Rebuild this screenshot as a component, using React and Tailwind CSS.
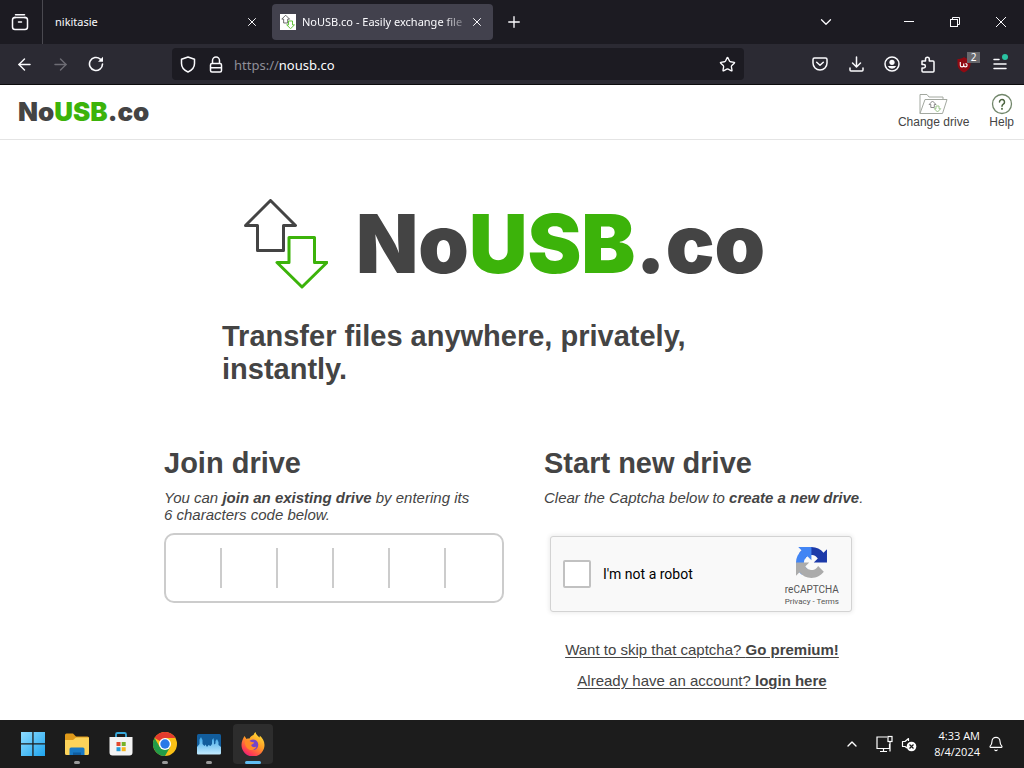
import { Star, X, Plus, ChevronDown, ChevronUp, ArrowLeft, ArrowRight, Bell } from "lucide-react";

const codeFields = [1, 2, 3, 4, 5, 6];

const UP_ARROW = "M27.500 1.500 L52.500 26.500 H40.500 V51.500 H14.500 V26.500 H2.500 Z";
const DOWN_ARROW = "M46 38.500 H71.500 V63.500 H84 L59 88 L34 63.500 H46 Z";

function Arrows({ className, stroke = 3 }) {
  return (
    <svg viewBox="0 0 85 90" className={className} fill="none" strokeWidth={stroke} strokeLinejoin="round">
      <path d={UP_ARROW} stroke="#444" />
      <path d={DOWN_ARROW} stroke="#3cb30a" />
    </svg>
  );
}

function Wordmark({ className }) {
  return (
    <span className={`font-[Inter,sans-serif] text-[#444] ${className}`}>
      No<span className="text-[#3cb30a]">USB</span>.co
    </span>
  );
}

function IconButton({ label, className = "", children }) {
  return (
    <button type="button" aria-label={label} className={`flex items-center justify-center ${className}`}>
      {children}
    </button>
  );
}

function TabBar() {
  return (
    <div className="flex h-11 items-center bg-[#1c1b22]">
      <IconButton label="Firefox View" className="h-full w-[43px] border-r border-[#4a4950] pr-0.5">
        <svg width="18" height="18" viewBox="0 0 18 18" fill="none" stroke="#fbfbfe" strokeWidth="1.500" strokeLinecap="round">
          <path d="M4.500 1.700h9" />
          <rect x="1.500" y="4.500" width="15" height="12" rx="2.500" />
          <path d="M3 4.500h1.500M13.500 4.500h1.500M7.500 9h3" />
        </svg>
      </IconButton>
      <div className="flex h-9 w-[229px] items-center justify-between pl-3 pr-[13px]">
        <span>nikitasie</span>
        <IconButton label="Close tab nikitasie">
          <X size={14} strokeWidth={1.7} />
        </IconButton>
      </div>
      <div className="flex h-9 w-[221px] items-center rounded bg-[#42414d] pl-2 pr-[9px]">
        <span className="flex size-4 shrink-0 items-center justify-center bg-white">
          <Arrows className="size-3.5" stroke={5} />
        </span>
        <span className="ml-1.5 flex-1 whitespace-nowrap [mask-image:linear-gradient(to_right,black_84%,transparent)]">
          NoUSB.co - Easily exchange file
        </span>
        <IconButton label="Close tab NoUSB.co">
          <X size={14} strokeWidth={1.7} />
        </IconButton>
      </div>
      <IconButton label="New tab" className="ml-3">
        <Plus size={18} strokeWidth={1.8} />
      </IconButton>
      <div className="ml-auto flex items-center">
        <IconButton label="List all tabs" className="mr-[42px] w-9">
          <ChevronDown size={18} strokeWidth={1.7} />
        </IconButton>
        <IconButton label="Minimize" className="w-[46px]">
          <svg width="12" height="12" stroke="currentColor"><path d="M1 5.500h10" /></svg>
        </IconButton>
        <IconButton label="Restore" className="w-[46px]">
          <svg width="12" height="12" viewBox="0 0 12 12" fill="none" stroke="currentColor">
            <rect x="1.500" y="3.500" width="7" height="7" />
            <path d="M3.500 3.500v-2h7v7h-2" />
          </svg>
        </IconButton>
        <IconButton label="Close window" className="w-[46px]">
          <svg width="12" height="12" stroke="currentColor"><path d="M1 1l10 10M11 1L1 11" /></svg>
        </IconButton>
      </div>
    </div>
  );
}

function NavBar() {
  return (
    <div className="flex h-[41px] items-center border-b border-[#0c0c0d] bg-[#2b2a33]">
      <IconButton label="Back" className="ml-3 w-6">
        <ArrowLeft size={19} strokeWidth={1.8} />
      </IconButton>
      <IconButton label="Forward" className="ml-3 w-6 text-[#6d6c74]">
        <ArrowRight size={19} strokeWidth={1.8} />
      </IconButton>
      <IconButton label="Reload" className="ml-3 w-6">
        <svg width="16" height="16" viewBox="0 0 16 16" fill="none" stroke="currentColor" strokeWidth="1.600" strokeLinecap="round">
          <path d="M14.500 8A6.500 6.500 0 1 1 12.300 3.100" />
          <path d="M15 .8v5h-5z" fill="currentColor" stroke="none" />
        </svg>
      </IconButton>
      <div className="ml-16 flex h-8 flex-1 items-center rounded bg-[#1c1b22] pl-2 pr-2">
        <svg width="16" height="17" viewBox="0 0 16 17" fill="none" stroke="currentColor" strokeWidth="1.500" strokeLinejoin="round">
          <path d="M8 1l6.500 2.300v4.200c0 4-2.600 6.800-6.500 8.500C4.100 14.300 1.500 11.500 1.500 7.500V3.300z" />
        </svg>
        <svg width="14" height="17" viewBox="0 0 14 17" className="ml-[13px]" fill="none" stroke="currentColor" strokeWidth="1.500">
          <rect x="1.500" y="7.500" width="11" height="8.500" rx="1.500" />
          <path d="M3.500 7.500V4.500a3.500 3.500 0 0 1 7 0v3M1.500 11.700h11" />
        </svg>
        <span className="ml-[11px] flex-1 pt-[3px] font-['Noto_Sans',sans-serif] text-[13px] text-[#8f8f98]">
          https://<span className="text-[#fbfbfe]">nousb.co</span>
        </span>
        <IconButton label="Bookmark this page">
          <Star size={17} strokeWidth={1.9} />
        </IconButton>
      </div>
      <div className="ml-[58px] flex items-center pr-1.5">
        <IconButton label="Save to Pocket" className="w-9">
          <svg width="16" height="14" viewBox="0 0 16 14" fill="none" stroke="currentColor" strokeWidth="1.500" strokeLinecap="round" strokeLinejoin="round">
            <path d="M2.500 1h11a1.500 1.500 0 0 1 1.500 1.500V6a7 7 0 0 1-14 0V2.500A1.500 1.500 0 0 1 2.500 1z" />
            <path d="M4.700 5.200L8 8.300l3.300-3.100" />
          </svg>
        </IconButton>
        <IconButton label="Downloads" className="w-9">
          <svg width="15" height="16" viewBox="0 0 15 16" fill="none" stroke="currentColor" strokeWidth="1.500" strokeLinecap="round" strokeLinejoin="round">
            <path d="M7.500 1v9.500M3.500 7l4 4 4-4M1 12v2a1 1 0 0 0 1 1h11a1 1 0 0 0 1-1v-2" />
          </svg>
        </IconButton>
        <IconButton label="Account" className="w-9">
          <svg width="16" height="16" viewBox="0 0 16 16" fill="none" stroke="currentColor" strokeWidth="1.500">
            <circle cx="8" cy="8" r="7" />
            <circle cx="8" cy="6.300" r="2.600" fill="currentColor" stroke="none" />
            <path d="M3.800 10h8.400a4.600 4.600 0 0 1-8.400 0z" fill="currentColor" stroke="none" />
          </svg>
        </IconButton>
        <IconButton label="Extensions" className="w-9">
          <svg width="16" height="17" viewBox="0 0 16 17" fill="none" stroke="currentColor" strokeWidth="1.500" strokeLinejoin="round">
            <path d="M2 5h3.500V3.200a1.900 1.900 0 0 1 3.800 0V5H13a1 1 0 0 1 1 1v9a1 1 0 0 1-1 1H3a1 1 0 0 1-1-1v-3h1.700a1.700 1.700 0 0 0 0-3.400H2z" />
          </svg>
        </IconButton>
        <IconButton label="uBlock Origin" className="relative w-9">
          <svg width="16" height="17" viewBox="0 0 16 17">
            <path d="M8 1c2 1.500 4 2 6.500 2v5c0 4-2.500 6.500-6.500 8.500C4 14.500 1.500 12 1.500 8V3C4 3 6 2.500 8 1z" fill="#900a12" />
            <path d="M4.300 6v3.200a1.700 1.700 0 0 0 3.400 0V7.500M7.700 9.200a1.700 1.700 0 0 0 3.400 0 1.700 1.700 0 0 0-1.700-1.700" fill="none" stroke="#fff" strokeWidth="1.100" />
          </svg>
          <span className="absolute -top-1 right-0.5 flex h-[11px] w-[13px] items-center justify-center bg-[#68686d] text-[10px] text-white">
            2
          </span>
        </IconButton>
        <IconButton label="Open application menu" className="relative w-9">
          <svg width="14" height="12" viewBox="0 0 14 12" stroke="currentColor" strokeWidth="1.500" strokeLinecap="round">
            <path d="M1 1.500h5M1 6h12M1 10.500h12" />
          </svg>
          <span className="absolute -top-1 right-2.5 size-1.5 rounded-full bg-[#2ac3a2]" />
        </IconButton>
      </div>
    </div>
  );
}

function SiteHeader() {
  return (
    <header className="flex h-[55px] items-center justify-between border-b border-[#e4e4e4] pl-[18px] pr-2.5">
      <a href="#home" className="pb-0.5">
        <Wordmark className="text-[26px] font-black" />
      </a>
      <nav className="flex items-end gap-5 pb-0.5 text-[12px] text-[#444]">
        <a href="#change" className="flex flex-col items-center leading-[14px]">
          <svg width="29" height="22" viewBox="0 0 29 22" fill="none" stroke="#a3a8a0" strokeLinejoin="round">
            <path d="M1 20.500V1.500h7l2 2.500h14v3" />
            <path d="M1 20.500L6 6.500h22L23.500 20.500z" />
            <path d="M13.500 8l3.500 3.500h-1.700v3h-3.500v-3h-1.700z" stroke="#8a8a8a" />
            <path d="M17 13h3v2.700h1.700L18.500 19l-3.200-3.300H17z" stroke="#9cc58c" />
          </svg>
          Change drive
        </a>
        <a href="#help" className="flex flex-col items-center leading-[14px]">
          <svg width="22" height="22" viewBox="0 0 22 22" fill="none" stroke="#71866a" strokeWidth="1.300" strokeLinecap="round">
            <circle cx="11" cy="11" r="9.500" />
            <path d="M8.500 9a2.500 2.500 0 1 1 3.800 2.100c-.9.600-1.300 1-1.300 2.100" stroke="#4b633f" strokeWidth="1.500" />
            <path d="M11 15.700v.2" stroke="#4b633f" strokeWidth="1.800" />
          </svg>
          Help
        </a>
      </nav>
    </header>
  );
}

function JoinDrive() {
  return (
    <section className="w-[340px]">
      <h2 className="text-[29px] font-bold leading-[33px]">Join drive</h2>
      <p className="mt-[9px] text-[15px] italic leading-[17px]">
        You can <b>join an existing drive</b> by entering its
        <br />6 characters code below.
      </p>
      <div className="mt-2.5 flex h-[70px] items-center rounded-[10px] border-2 border-[#ccc]">
        {codeFields.map((n) => (
          <input
            key={n}
            type="text"
            maxLength={1}
            aria-label={`Code character ${n}`}
            className="h-10 w-1/6 border-r-2 border-[#ccc] text-center text-2xl outline-none last:border-r-0"
          />
        ))}
      </div>
    </section>
  );
}

function Captcha() {
  return (
    <div className="ml-1.5 flex h-[76px] w-[302px] items-center rounded-[3px] border border-[#d3d3d3] bg-[#f9f9f9] pl-3 pr-3 font-[Roboto,sans-serif] text-black shadow-[0_0_4px_1px_rgba(0,0,0,0.08)]">
      <input
        id="robot"
        type="checkbox"
        className="size-7 appearance-none rounded-xs border-2 border-[#c1c1c1] bg-white"
      />
      <label htmlFor="robot" className="ml-3 text-[14px]">
        I'm not a robot
      </label>
      <div className="ml-auto flex flex-col items-center pt-1.5 text-[#555]">
        <svg width="31" height="31" viewBox="0 0 64 64">
          <path d="M64 31.955l-.033-1.370V4.687l-7.160 7.160C50.948 4.674 42.033.093 32.050.093c-10.400 0-19.622 4.960-25.458 12.640l11.736 11.860a15.550 15.550 0 0 1 4.754-5.334c2.050-1.600 4.952-2.906 8.968-2.906.485 0 .860.057 1.135.163 4.976.393 9.288 3.140 11.828 7.124l-8.307 8.307L64 31.953" fill="#1c3aa9" />
          <path d="M31.862.094l-1.370.033H4.594l7.160 7.160C4.580 13.147 0 22.060 0 32.046c0 10.400 4.960 19.622 12.640 25.458L24.500 45.768a15.550 15.550 0 0 1-5.334-4.754c-1.600-2.050-2.906-4.952-2.906-8.968 0-.485.057-.860.163-1.135.393-4.976 3.140-9.288 7.124-11.828l8.307 8.307L31.860.095" fill="#4285f4" />
          <path d="M.001 32.045l.033 1.370v25.898l7.160-7.160c5.860 7.173 14.774 11.754 24.760 11.754 10.400 0 19.622-4.960 25.458-12.640l-11.736-11.860a15.550 15.550 0 0 1-4.754 5.334c-2.050 1.600-4.952 2.906-8.968 2.906-.485 0-.860-.057-1.135-.163-4.976-.393-9.288-3.140-11.828-7.124l8.307-8.307L0 32.047" fill="#ababab" />
        </svg>
        <span className="mt-1.5 text-[10px] leading-3">reCAPTCHA</span>
        <span className="text-[8px] leading-[11px]">
          <a href="#privacy">Privacy</a> - <a href="#terms">Terms</a>
        </span>
      </div>
    </div>
  );
}

function StartDrive() {
  return (
    <section className="w-[316px]">
      <h2 className="text-[29px] font-bold leading-[33px]">Start new drive</h2>
      <p className="mt-[9px] whitespace-nowrap text-[15px] italic leading-[17px]">
        Clear the Captcha below to <b>create a new drive</b>.
      </p>
      <div className="mt-[30px]">
        <Captcha />
      </div>
      <div className="mt-[29px] flex flex-col items-center gap-3.5 text-[15px] leading-[17px]">
        <a href="#premium" className="underline underline-offset-2">
          Want to skip that captcha? <b>Go premium!</b>
        </a>
        <a href="#login" className="underline underline-offset-2">
          Already have an account? <b>login here</b>
        </a>
      </div>
    </section>
  );
}

function WindowsIcon() {
  return (
    <svg width="24" height="24" viewBox="0 0 24 24">
      <defs>
        <linearGradient id="win" x1="0" y1="0" x2="1" y2="1">
          <stop offset="0" stopColor="#8edcff" />
          <stop offset="1" stopColor="#1ea4ee" />
        </linearGradient>
      </defs>
      <path d="M0 0h11.300v11.300H0zM12.600 0H24v11.300H12.600zM0 12.600h11.300V24H0zM12.600 12.600H24V24H12.600z" fill="url(#win)" />
    </svg>
  );
}

function FolderIcon() {
  return (
    <svg width="26" height="24" viewBox="0 0 26 24">
      <path d="M1 3a1.500 1.500 0 0 1 1.500-1.500H9L12 4.500h11.500A1.500 1.500 0 0 1 25 6v7H1z" fill="#e09a1a" />
      <path d="M1 8h8l3-2.500h13v16a1.500 1.500 0 0 1-1.500 1.500h-21A1.500 1.500 0 0 1 1 21.500z" fill="#fcd35a" />
      <path d="M5.500 23v-6A1.500 1.500 0 0 1 7 15.500h12a1.500 1.500 0 0 1 1.500 1.500v6z" fill="#1979c4" />
      <path d="M9 23v-2.500h8V23z" fill="#0f5c9e" />
    </svg>
  );
}

function StoreIcon() {
  return (
    <svg width="24" height="24" viewBox="0 0 24 24">
      <path d="M7 6V2.500A1.500 1.500 0 0 1 8.500 1h7A1.500 1.500 0 0 1 17 2.500V6" fill="none" stroke="#38a9dc" strokeWidth="1.800" />
      <path d="M.5 5h23v15.500a3 3 0 0 1-3 3h-17a3 3 0 0 1-3-3z" fill="#f3f3f3" />
      <path d="M7.500 10h4v4h-4z" fill="#e2492d" />
      <path d="M12.700 10h4v4h-4z" fill="#75b126" />
      <path d="M7.500 15.200h4v4h-4z" fill="#2399d6" />
      <path d="M12.700 15.200h4v4h-4z" fill="#f5b51b" />
    </svg>
  );
}

function ChromeIcon() {
  return (
    <svg width="24" height="24" viewBox="0 0 24 24">
      <circle cx="12" cy="12" r="12" fill="#fbc116" />
      <path d="M12 12L1.600 6A12 12 0 0 1 22.400 6H12z" fill="#e33b2e" />
      <path d="M1.600 6A12 12 0 0 0 12 24l5.200-9L12 12 6.800 15z" fill="#229b48" />
      <circle cx="12" cy="12" r="6" fill="#fff" />
      <circle cx="12" cy="12" r="4.700" fill="#2879e8" />
    </svg>
  );
}

function MonitorIcon() {
  return (
    <svg width="26" height="22" viewBox="0 0 26 22">
      <defs>
        <linearGradient id="graph" x1="0" y1="0" x2="0" y2="1">
          <stop offset="0" stopColor="#3aa5e6" />
          <stop offset="1" stopColor="#c4ecff" />
        </linearGradient>
      </defs>
      <rect x="1" y="1" width="24" height="20" rx="1.500" fill="#125d9c" />
      <path d="M1 14l2.500-3V6.500L5 4l1.500 3v4l2 2 1-1.500 1.500 2.500 1.500-2 2 1 1.500-2V7l1.500-2L18 8v3.500l1.500-1V8L21 6l1.500 3v3l2.500 2v6a1.500 1.500 0 0 1-1.500 1.500h-21A1.500 1.500 0 0 1 1 19.500z" fill="url(#graph)" />
    </svg>
  );
}

function FirefoxIcon() {
  return (
    <svg width="24" height="24" viewBox="0 0 24 24">
      <defs>
        <linearGradient id="fox" x1="0.800" y1="0" x2="0.200" y2="1">
          <stop offset="0" stopColor="#ffe43b" />
          <stop offset="0.450" stopColor="#ff9a24" />
          <stop offset="0.800" stopColor="#ff4150" />
          <stop offset="1" stopColor="#e31587" />
        </linearGradient>
      </defs>
      <path d="M3.500 4l2 3c1-.5 2-.600 3-.5C9.300 4.500 11 3.500 12.500 3 13 1.800 13.600.8 14.500 0c.5 2.500 2.200 3.800 4 5.500.3-.6.300-1.300.2-2C21.500 6 23.500 9 23.500 13a11.500 11.500 0 0 1-23 0C.5 9.500 2 6.500 3.500 4z" fill="url(#fox)" />
      <circle cx="12" cy="12.800" r="5.300" fill="#7446c8" />
      <path d="M4 9c2-1 4-.8 6 .7 1 .6 2.500.3 3.200.8-.5 1.600-2.500 1.700-3 2.800.8 2 3.500 2.300 5.200 1.200-1 3-4.500 4.500-7.500 3C5 16 3.500 12.500 4 9z" fill="#ff8a27" />
    </svg>
  );
}

const taskbarApps = [
  { name: "Start", icon: <WindowsIcon /> },
  { name: "File Explorer", icon: <FolderIcon />, running: true },
  { name: "Microsoft Store", icon: <StoreIcon /> },
  { name: "Google Chrome", icon: <ChromeIcon />, running: true },
  { name: "Task Manager", icon: <MonitorIcon />, running: true },
  { name: "Firefox", icon: <FirefoxIcon />, active: true },
];

function Taskbar() {
  return (
    <footer className="flex h-12 items-center justify-between bg-[#1c1c1c] pl-[13px] pr-5 font-['Open_Sans',sans-serif] text-white">
      <div className="flex gap-1">
        {taskbarApps.map((app) => (
          <button
            key={app.name}
            type="button"
            aria-label={app.name}
            className={`relative flex size-10 items-center justify-center rounded ${app.active ? "bg-[#2d2d2d]" : ""}`}
          >
            {app.icon}
            {app.running && <span className="absolute bottom-0 h-[3px] w-1.5 rounded-full bg-[#9a9a9a]" />}
            {app.active && <span className="absolute bottom-0 h-[3px] w-4 rounded-full bg-[#5fbdf2]" />}
          </button>
        ))}
      </div>
      <div className="flex items-center">
        <IconButton label="Show hidden icons">
          <ChevronUp size={16} strokeWidth={2} />
        </IconButton>
        <svg width="17" height="18" viewBox="0 0 17 18" className="ml-4" fill="none" stroke="currentColor" strokeWidth="1.200">
          <path d="M11 2H1v11.500h12.500V9M4 16.500h7M7.500 13.500v3M14 6v10.500" />
          <rect x="12" y="1.500" width="4" height="5" />
        </svg>
        <svg width="16" height="16" viewBox="0 0 16 16" className="ml-2" fill="none" stroke="currentColor" strokeWidth="1.200">
          <path d="M7.500 5V2.500L4 5.500H1.500v5H4L6 12" strokeLinejoin="round" />
          <circle cx="10.500" cy="10.500" r="4.800" fill="#fff" stroke="none" />
          <path d="M8.500 8.500l4 4M12.500 8.500l-4 4" stroke="#1c1c1c" />
        </svg>
        <div className="ml-[17px] text-right text-[11px] leading-4">
          <div>4:33 AM</div>
          <div>8/4/2024</div>
        </div>
        <IconButton label="Notifications" className="ml-2">
          <Bell size={16} strokeWidth={1.7} />
        </IconButton>
      </div>
    </footer>
  );
}

export default function App() {
  return (
    <div className="flex min-h-screen flex-col bg-white font-['Liberation_Sans',Arial,sans-serif] text-[#444]">
      <div className="font-['Noto_Sans',sans-serif] text-[11px] text-[#fbfbfe]">
        <TabBar />
        <NavBar />
      </div>
      <SiteHeader />
      <main className="flex-1 pb-7">
        <div className="mx-auto max-w-[580px] pt-[59px]">
          <div className="flex items-center gap-7 pl-[21px]">
            <Arrows className="h-[90px] w-[85px] shrink-0" />
            <Wordmark className="text-[81px] font-black leading-[90px]" />
          </div>
          <h1 className="mt-[31px] text-[29px] font-bold leading-[33px]">
            Transfer files anywhere, privately, instantly.
          </h1>
        </div>
        <div className="mt-[61px] flex flex-wrap justify-center gap-10">
          <JoinDrive />
          <StartDrive />
        </div>
      </main>
      <Taskbar />
    </div>
  );
}
